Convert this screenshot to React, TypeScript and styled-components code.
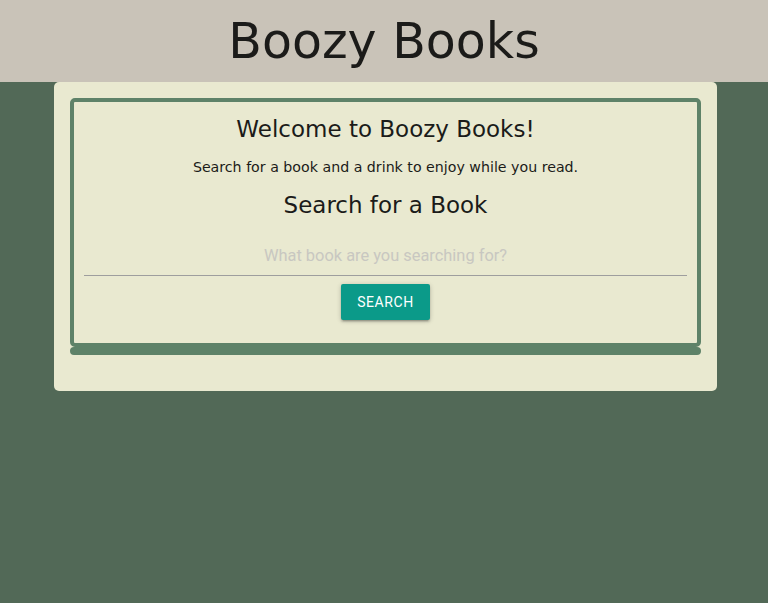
import React from "react";
import styled, { createGlobalStyle } from "styled-components";

const Global = createGlobalStyle`
  html, body {
    margin: 0;
    padding: 0;
    background: #526957;
    min-height: 100%;
  }
  body {
    font-family: "DejaVu Sans", Verdana, sans-serif;
    color: #1b1b19;
  }
  * { box-sizing: border-box; }
`;

const Header = styled.header`
  height: 82px;
  background: #c9c3b8;
  display: flex;
  align-items: center;
  justify-content: center;
`;

const Title = styled.h1`
  margin: 0;
  font-family: "DejaVu Sans", Verdana, sans-serif;
  font-weight: normal;
  font-size: 49px;
  line-height: 1;
  color: #1b1b19;
`;

const Card = styled.main`
  margin: 0 51px 0 54px;
  padding: 16px 16px 36px;
  background: #e9e9d0;
  border-radius: 5px;
`;

const Panel = styled.section`
  border: 4px solid #5e8268;
  border-radius: 5px;
  padding: 0 10px 23px;
  text-align: center;
`;

const Bar = styled.div`
  height: 8px;
  border: 4px solid #5e8268;
  border-radius: 4px;
  background: #5e8268;
`;

const Heading = styled.h2<{ $top: number }>`
  margin: ${(p) => p.$top}px 0 0;
  font-weight: normal;
  font-size: 23px;
  line-height: 27px;
`;

const Lead = styled.p`
  margin: 15px 0 0;
  font-size: 14.2px;
  line-height: 18px;
`;

const Input = styled.input`
  display: block;
  width: 100%;
  height: 48px;
  margin: 9px 0 8px;
  padding: 7px 0 0;
  border: none;
  border-bottom: 1px solid #9e9e9e;
  background: transparent;
  outline: none;
  text-align: center;
  font-family: Roboto, "Liberation Sans", sans-serif;
  font-size: 16.4px;
  color: #1b1b19;
  &::placeholder {
    color: #c8c7c1;
  }
`;

const Button = styled.button`
  height: 36px;
  padding: 0 16px;
  border: none;
  border-radius: 2px;
  background: #0b9a89;
  color: #fff;
  font-family: Roboto, "Liberation Sans", sans-serif;
  font-size: 14px;
  letter-spacing: 0.6px;
  text-transform: uppercase;
  cursor: pointer;
  box-shadow: 0 2px 2px 0 rgba(0, 0, 0, 0.14), 0 3px 1px -2px rgba(0, 0, 0, 0.12),
    0 1px 5px 0 rgba(0, 0, 0, 0.2);
`;

export default function App() {
  return (
    <>
      <Global />
      <Header>
        <Title>Boozy Books</Title>
      </Header>
      <Card>
        <Panel>
          <Heading $top={14}>Welcome to Boozy Books!</Heading>
          <Lead>Search for a book and a drink to enjoy while you read.</Lead>
          <Heading $top={16}>Search for a Book</Heading>
          <Input placeholder="What book are you searching for?" />
          <Button>Search</Button>
        </Panel>
        <Bar />
      </Card>
    </>
  );
}
